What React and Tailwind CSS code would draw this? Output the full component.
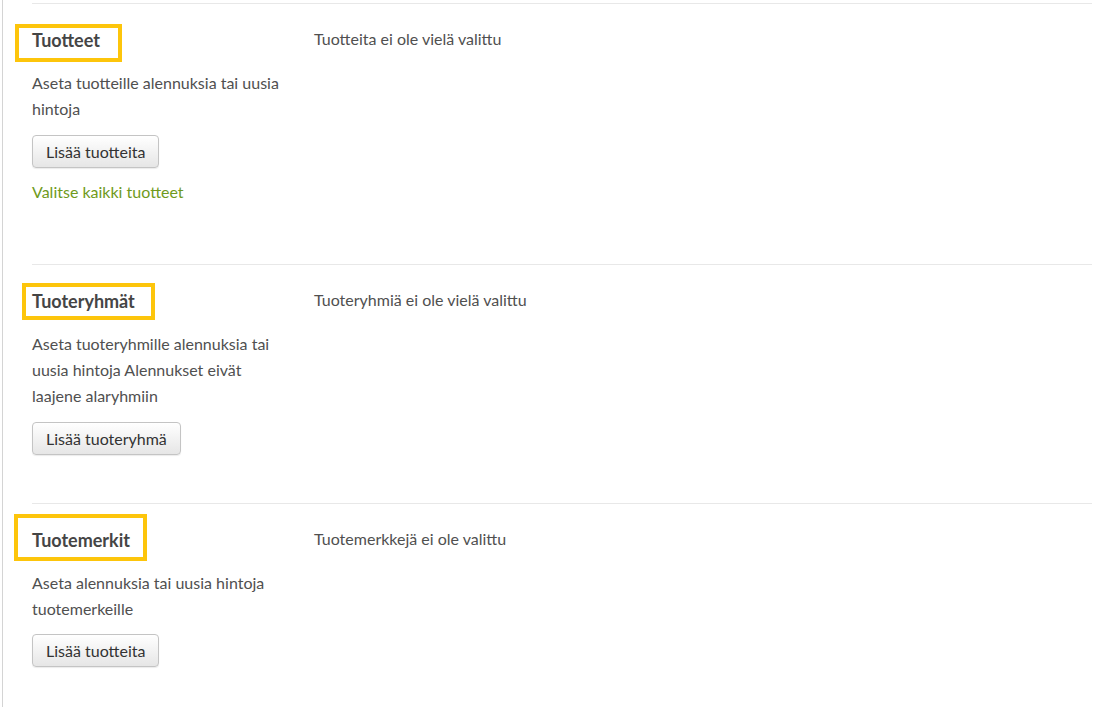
export default function App() {
  const font = { fontFamily: '"Lato", "Open Sans", sans-serif' };
  const sections = [
    {
      title: "Tuotteet",
      lines: ["Aseta tuotteille alennuksia tai uusia", "hintoja"],
      button: "Lisää tuotteita",
      link: "Valitse kaikki tuotteet",
      empty: "Tuotteita ei ole vielä valittu",
      box: "left-[15px] top-[24px] w-[107px] h-[38px]",
      pb: "pb-[48px]",
      bmt: "mt-[13px]",
    },
    {
      title: "Tuoteryhmät",
      lines: ["Aseta tuoteryhmille alennuksia tai", "uusia hintoja Alennukset eivät", "laajene alaryhmiin"],
      button: "Lisää tuoteryhmä",
      empty: "Tuoteryhmiä ei ole vielä valittu",
      box: "left-[22px] top-[283px] w-[133px] h-[37px]",
      pb: "pb-[48px]",
      bmt: "mt-[13px]",
    },
    {
      title: "Tuotemerkit",
      lines: ["Aseta alennuksia tai uusia hintoja", "tuotemerkeille"],
      button: "Lisää tuotteita",
      empty: "Tuotemerkkejä ei ole valittu",
      box: "left-[14px] top-[514px] w-[133px] h-[47px]",
      pb: "pb-[40px]",
      bmt: "mt-[12px]",
    },
  ];
  return (
    <div className="relative min-h-[707px] bg-white" style={font}>
      <div className="ml-[2px] min-h-[707px] border-l border-[#d4d4d4] pl-[29px] pr-[1px] pt-[3px]">
        {sections.map((s, i) => (
          <div key={i} className={`flex border-t border-[#e8e8e8] pt-[23px] ${s.pb}`}>
            <div className="w-[282px] shrink-0">
              <div className="text-[18px] font-bold leading-[26px] text-[#454545]">{s.title}</div>
              <div className="mt-[17px] text-[16px] leading-[26px] text-[#505050]">
                {s.lines.map((l, j) => (
                  <div key={j}>{l}</div>
                ))}
              </div>
              <button className={`${s.bmt} h-[33px] rounded-[4px] border border-[#c4c4c4] bg-gradient-to-b from-white to-[#e6e6e6] px-[13px] text-[16px] leading-[31px] text-[#333] shadow-[0_1px_1px_rgba(0,0,0,0.08)]`}>
                {s.button}
              </button>
              {s.link && (
                <div className="mt-[12px] mb-[12px] text-[16px] leading-[24px] text-[#6f9a1c]">{s.link}</div>
              )}
            </div>
            <div className="-mt-px text-[16px] leading-[26px] text-[#505050]">{s.empty}</div>
          </div>
        ))}
      </div>
      {sections.map((s, i) => (
        <div key={i} className={`pointer-events-none absolute border-[4px] border-[#fdc50b] ${s.box}`} />
      ))}
    </div>
  );
}
